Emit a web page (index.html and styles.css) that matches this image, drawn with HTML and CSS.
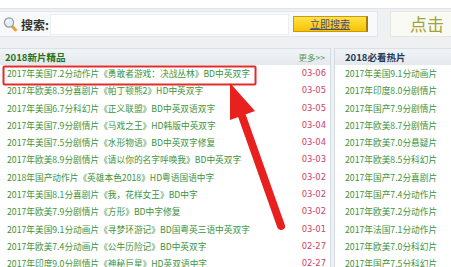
FILE: index.html
```html
<!DOCTYPE html>
<html lang="zh-CN">
<head>
  <meta charset="UTF-8" />
  <title>电影天堂</title>
  <link rel="stylesheet" href="styles.css">
</head>
<body>
  <div class="pagina">
    <div class="topo"></div>
    <div class="barra">
      <div class="busca">
        <svg class="lupa" width="14" height="16" viewBox="0 0 14 16">
          <line x1="8.5" y1="9.5" x2="12.5" y2="14" stroke="#e3a23a" stroke-width="3" stroke-linecap="round"/>
          <circle cx="6" cy="6.5" r="4.6" fill="#e4ebf2" stroke="#8e9cad" stroke-width="1.2"/>
          <circle cx="4.8" cy="5.2" r="1.6" fill="#fff"/>
        </svg>
        <span class="rotulo">搜索:</span>
        <div class="campo"></div>
        <div class="btn-busca">立即搜索</div>
      </div>
      <div class="clique">点击</div>
    </div>

    <div class="listas">
      <div class="painel esq">
        <div class="cab">
          <span class="titulo">2018新片精品</span>
          <span class="mais">更多>></span>
        </div>
        <ul class="itens">
          <li><span>2017年美国7.2分动作片《勇敢者游戏：决战丛林》BD中英双字</span><em>03-06</em></li>
          <li><span>2017年欧美8.3分喜剧片《帕丁顿熊2》HD中英双字</span><em>03-05</em></li>
          <li><span>2017年美国6.7分科幻片《正义联盟》BD中英双语双字</span><em>03-05</em></li>
          <li><span>2017年美国7.9分剧情片《马戏之王》HD韩版中英双字</span><em>03-04</em></li>
          <li><span>2017年美国7.5分剧情片《水形物语》BD中英双字修复</span><em>03-04</em></li>
          <li><span>2017年欧美8.9分剧情片《请以你的名字呼唤我》BD中英双字</span><em>03-03</em></li>
          <li><span>2018年国产动作片《英雄本色2018》HD粤语国语中字</span><em>03-02</em></li>
          <li><span>2017年美国8.1分喜剧片《我，花样女王》BD中字</span><em>03-02</em></li>
          <li><span>2017年欧美7.9分剧情片《方形》BD中字修复</span><em>03-02</em></li>
          <li><span>2017年美国9.1分动画片《寻梦环游记》BD国粤英三语中英双字</span><em>03-01</em></li>
          <li><span>2017年欧美7.4分动画片《公牛历险记》BD中英双字</span><em>02-27</em></li>
          <li><span>2017年印度9.0分剧情片《神秘巨星》HD英双语中字</span><em>02-27</em></li>
        </ul>
      </div>
      <div class="painel dir">
        <div class="cab">
          <span class="titulo">2018必看热片</span>
        </div>
        <ul class="itens">
          <li><span>2017年美国9.1分动画片</span></li>
          <li><span>2017年印度8.0分剧情片</span></li>
          <li><span>2017年国产7.9分剧情片</span></li>
          <li><span>2017年欧美8.7分剧情片</span></li>
          <li><span>2017年欧美7.0分悬疑片</span></li>
          <li><span>2017年欧美8.5分科幻片</span></li>
          <li><span>2017年国产7.2分喜剧片</span></li>
          <li><span>2017年国产7.4分动作片</span></li>
          <li><span>2017年欧美7.2分动作片</span></li>
          <li><span>2017年法国7.1分动作片</span></li>
          <li><span>2017年欧美7.0分科幻片</span></li>
          <li><span>2017年国产7.5分科幻片</span></li>
        </ul>
      </div>
    </div>

    <!-- marcação vermelha por cima da lista -->
    <svg class="marca" width="451" height="267" viewBox="0 0 451 267">
      <rect x="3.5" y="66.5" width="252" height="18" fill="none" stroke="#e22b2b" stroke-width="2" rx="1"/>
      <line x1="242" y1="116" x2="281" y2="226" stroke="#e8201e" stroke-width="8" stroke-linecap="round"/>
      <polygon points="230,83 230,120 255,111" fill="#e8201e"/>
    </svg>
  </div>
</body>
</html>
```

FILE: styles.css
```css
* {
  box-sizing: border-box;
}

body {
  margin: 0;
  background: #eef0f2;
  font-family: "Noto Sans CJK SC", "DejaVu Sans", sans-serif;
  overflow: hidden;
}

.pagina {
  position: relative;
  width: 451px;
  height: 267px;
  overflow: hidden;
}

.topo {
  height: 9px;
  background: #fff;
  border-bottom: 1px solid #e2e5e8;
}

.barra {
  display: flex;
  gap: 12px;
  margin-top: 2px;
  height: 26px;
}

.busca {
  width: 378px;
  flex-shrink: 0;
  display: flex;
  align-items: center;
  background: #f8f9fa;
  border: 1px solid #e3e6ea;
  border-left: none;
}

.lupa {
  margin-left: 3px;
  flex-shrink: 0;
}

.rotulo {
  font-size: 12px;
  font-weight: bold;
  color: #333;
  margin-left: 4px;
  margin-right: 1px;
  white-space: nowrap;
}

.campo {
  width: 239px;
  height: 21px;
  background: #fff;
  border: 1px solid #eceef1;
}

.btn-busca {
  margin-left: 4px;
  width: 75px;
  height: 16px;
  background: linear-gradient(#ffe34a, #f6c200);
  border: 1px solid #c99a10;
  border-right: 2px solid #a47a08;
  font-size: 10px;
  line-height: 14px;
  text-align: center;
  color: #4a4a80;
  text-decoration: underline;
  white-space: nowrap;
}

.clique {
  flex: 1;
  min-width: 0;
  background: #f9faf4;
  border: 1px solid #e4e7e2;
  border-right: none;
  font-size: 17px;
  line-height: 24px;
  color: #a5a23a;
  padding-left: 19px;
  white-space: nowrap;
}

.listas {
  display: flex;
  margin-top: 11px;
}

.painel {
  background: #fff;
}

.esq {
  width: 331px;
  flex-shrink: 0;
  border-right: 1px solid #d4dce6;
}

.dir {
  flex: 1;
  min-width: 0;
  margin-left: 3px;
  border-left: 1px solid #d4dce6;
}

.cab {
  height: 17px;
  display: flex;
  justify-content: space-between;
  align-items: center;
  padding: 0 5px;
  background: linear-gradient(#f1f4f7, #e4e9ee);
  border-top: 1px solid #d9e0e8;
}

.titulo {
  font-size: 9.5px;
  font-weight: bold;
  color: #247224;
}

.dir .titulo {
  color: #1f3a56;
  padding-left: 5px;
}

.mais {
  font-size: 8.5px;
  color: #5a9a5a;
}

.itens {
  list-style: none;
  margin: 0;
  padding: 0;
}

.itens li {
  display: flex;
  justify-content: space-between;
  height: 17.3px;
  line-height: 17.3px;
  font-size: 8.7px;
  padding: 0 4px 0 7px;
  white-space: nowrap;
}

.itens span {
  color: #3d933d;
}

.dir .itens li {
  padding-left: 10px;
}

.itens em {
  font-style: normal;
  color: #cf4168;
  font-family: "DejaVu Sans", sans-serif;
  font-size: 8.4px;
}

.marca {
  position: absolute;
  top: 0;
  left: 0;
  pointer-events: none;
}
```
